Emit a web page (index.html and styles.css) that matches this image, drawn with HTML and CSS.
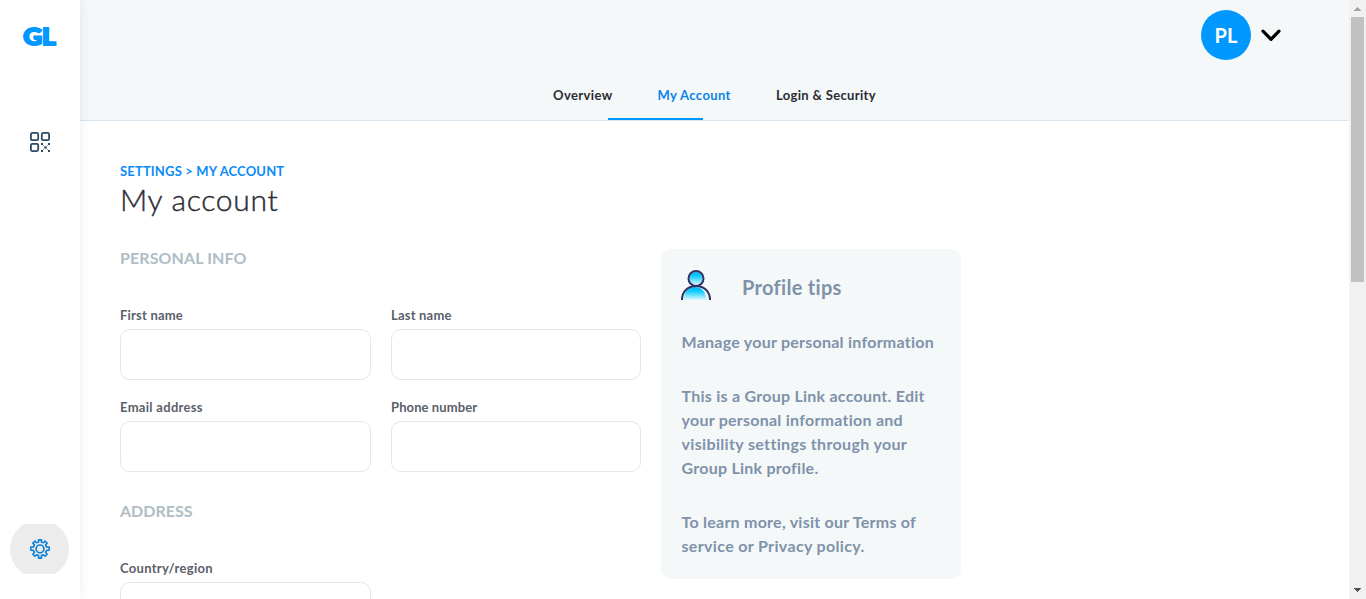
FILE: index.html
```html
<!DOCTYPE html>
<html lang="en">
<head>
<meta charset="utf-8">
<title>My account</title>
<link rel="stylesheet" href="styles.css">
</head>
<body>
<div class="app">
  <aside class="sidebar">
    <div class="logo">GL</div>
    <a class="side-link">
      <svg width="22" height="22" viewBox="0 0 22 22" fill="none" stroke="#2b4a66" stroke-width="1.8">
        <rect x="1.9" y="1.9" width="7.3" height="7.3" rx="1.5"/>
        <rect x="12.8" y="1.9" width="7.3" height="7.3" rx="1.5"/>
        <rect x="1.9" y="12.8" width="7.3" height="7.3" rx="1.5"/>
        <g fill="#2b4a66" stroke="none">
          <rect x="12" y="12" width="2" height="2"/><rect x="19" y="12" width="2" height="2"/>
          <rect x="15.3" y="15.3" width="2.4" height="2.4"/>
          <rect x="12" y="19" width="2" height="2"/><rect x="19" y="19" width="2" height="2"/>
        </g>
        <g fill="#2b4a66" stroke="none" opacity=".45">
          <rect x="14" y="14" width="1" height="1"/><rect x="18" y="14" width="1" height="1"/>
          <rect x="14" y="18" width="1" height="1"/><rect x="18" y="18" width="1" height="1"/>
        </g>
      </svg>
    </a>
    <a class="side-settings">
      <svg width="20" height="20" viewBox="0 0 20 20" fill="none" stroke="#1583d2" stroke-width="1.7" stroke-linejoin="round">
        <path d="M8.6.8h2.8v2.1l2 .8 1.6-1.500 2.1 2-1.5 1.7.8 1.9 2.8.3v3.1l-2.7.2-.9 1.900 1.500 1.900-2 2-1.800-1.400-1.900.8v2.600H8.600v-2.600l-1.900-.8-1.800 1.400-2-2 1.500-1.900-.9-1.900-2.700-.2V8.100l2.800-.3.8-1.900-1.500-1.700 2.100-2 1.600 1.500 2-.8z"/>
        <circle cx="10" cy="9.9" r="3.9"/>
      </svg>
    </a>
  </aside>
  <div class="page">
    <header class="header">
      <div class="user">
        <div class="avatar">PL</div>
        <svg width="20" height="13" viewBox="0 0 20 13" fill="none" stroke="#000" stroke-width="3.2" stroke-linecap="round" stroke-linejoin="round"><path d="M2 2.100l8 8.200 8-8.200"/></svg>
      </div>
      <nav class="tabs">
        <a class="tab">Overview</a>
        <a class="tab tab-active">My Account</a>
        <a class="tab tab-security">Login &amp; Security</a>
      </nav>
      <span class="tab-marker"></span>
    </header>
    <main class="content">
      <div class="crumbs">SETTINGS &gt; MY ACCOUNT</div>
      <h1 class="title">My account</h1>
      <div class="columns">
        <form class="form">
          <h2 class="section section-personal">PERSONAL INFO</h2>
          <div class="fields">
            <label class="field"><span class="label">First name</span><input class="input"></label>
            <label class="field"><span class="label">Last name</span><input class="input"></label>
            <label class="field"><span class="label label-wide">Email address</span><input class="input"></label>
            <label class="field"><span class="label label-tight">Phone number</span><input class="input"></label>
          </div>
          <h2 class="section section-address">ADDRESS</h2>
          <div class="fields fields-address">
            <label class="field"><span class="label label-wide">Country/region</span><input class="input"></label>
          </div>
        </form>
        <section class="tips">
          <div class="tips-head">
            <svg width="30" height="30" viewBox="0 0 30 30">
              <defs><linearGradient id="body-fill" x1="0" y1="0" x2="0" y2="1"><stop offset="0" stop-color="#00b0f8"/><stop offset=".3" stop-color="#08cbff"/><stop offset="1" stop-color="#dcf8fc"/></linearGradient></defs>
              <circle cx="15" cy="8.5" r="6.5" fill="url(#body-fill)"/>
              <path d="M3 30C3 21 8 17 14 17s11 4 11.5 13z" fill="url(#body-fill)"/>
              <g fill="none" stroke="#2f3064" stroke-width="2"><circle cx="15" cy="8.5" r="7.5"/><path d="M1 30C1 21.500 7 16 15 16s14 5.500 14 14"/></g>
            </svg>
            <h3 class="tips-title">Profile tips</h3>
          </div>
          <p class="tips-text">Manage your personal information</p>
          <p class="tips-text">This is a Group Link account. Edit<br>your personal information and<br><span class="loose">visibility settings through your</span><br>Group Link profile.</p>
          <p class="tips-text">To learn more, visit our Terms of<br><span class="loose">service or Privacy policy.</span></p>
        </section>
      </div>
    </main>
  </div>
  <div class="scrollbar">
    <svg width="17" height="17"><path d="M5 11h7v-1h-1V9h-1V8H9V7H8v1H7v1H6v1H5z" fill="#a3a3a3"/></svg>
    <div class="thumb"></div>
    <svg class="down" width="17" height="17"><path d="M5 6h7v1h-1v1h-1v1H9v1H8V9H7V8H6V7H5z" fill="#505050"/></svg>
  </div>
</div>
</body>
</html>
```
FILE: styles.css
```css
* { box-sizing: border-box; }
body { margin: 0; font-family: Lato, "Open Sans", sans-serif; font-weight: 700; background: #fff; color: #2b2c34; overflow: hidden; }
h1, h2, h3, p { margin: 0; }
svg { display: block; }
.app { display: flex; height: 599px; overflow: hidden; }

.sidebar { width: 80px; flex: none; display: flex; flex-direction: column; align-items: center; background: #fff; box-shadow: 0 0 10px rgba(40, 90, 150, .11); z-index: 1; }
.logo { height: 24px; margin: 24px 1px 0 0; font: 900 23px/24px Lato, sans-serif; color: #0098ff; -webkit-text-stroke: 2px #0098ff; transform: scaleX(1.13); }
.side-link { margin-top: 83px; }
.side-settings { width: 60px; height: 50px; margin: auto 1px 25px 0; background: #ececec; display: flex; align-items: center; justify-content: center; clip-path: circle(29.5px); padding-left: 1px; }

.page { flex: 1; min-width: 0; }
.header { position: relative; height: 121px; background: #f4f8f9; border-bottom: 1px solid #dce7f1; }
.user { height: 70px; display: flex; align-items: center; justify-content: flex-end; gap: 10px; padding-right: 68px; }
.avatar { width: 50px; height: 50px; border-radius: 50%; background: #0098ff; color: #fff; font-size: 20px; line-height: 50px; text-align: center; }
.tabs { display: flex; gap: 45px; padding-left: 473px; font-size: 13px; line-height: 20px; margin-top: 15px; letter-spacing: .39px; }
.tab { width: 59.5px; white-space: nowrap; }
.tab-active { width: 73.5px; color: #0b84e8; }
.tab-security { letter-spacing: .34px; }
.tab-marker { position: absolute; left: 528px; bottom: 0; width: 94.5px; height: 2px; background: #0098ff; }

.content { padding: 40px 40px 0; }
.crumbs { font-size: 13px; line-height: 20px; color: #0b8bf8; letter-spacing: .16px; }
.title { font-size: 30px; line-height: 36px; font-weight: 300; letter-spacing: .7px; -webkit-text-stroke: .4px #2b2c34; }
.columns { display: flex; gap: 20px; margin-top: 32px; align-items: flex-start; }
.form { width: 521px; }
.section { font-size: 16px; line-height: 20px; color: #afbdc5; }
.section-personal { line-height: 18px; margin-bottom: 38px; letter-spacing: .1px; }
.section-address { margin: 29px 0 37px; }
.fields { display: grid; grid-template-columns: 251px 250px; column-gap: 20px; row-gap: 17px; }
.field { display: block; height: 75px; }
.label { display: block; font-size: 13px; line-height: 20px; margin-bottom: 4px; color: #5b606b; letter-spacing: .2px; }
.label-wide { letter-spacing: .3px; }
.label-tight { letter-spacing: .1px; }
.input { display: block; width: 100%; height: 51px; border: 1px solid #e2e6ef; border-radius: 10px; background: #fff; }

.tips { width: 300px; height: 330px; border-radius: 10px; background: #f4f8f9; padding: 21px 0 0 20px; color: #7f92aa; }
.tips-head { display: flex; gap: 31px; height: 36px; }
.tips-title { font-size: 20px; line-height: 34px; letter-spacing: .3px; }
.tips-text { font-size: 16px; line-height: 24px; margin: 24px 0 30px .5px; white-space: nowrap; letter-spacing: .25px; }
.tips-text + .tips-text { margin-top: 0; }
.loose { letter-spacing: .34px; }

.scrollbar { width: 17px; flex: none; background: #f1f1f1; display: flex; flex-direction: column; }
.thumb { width: 13px; height: 265px; margin-left: 2px; background: #c1c1c1; }
.down { margin-top: auto; }
```
